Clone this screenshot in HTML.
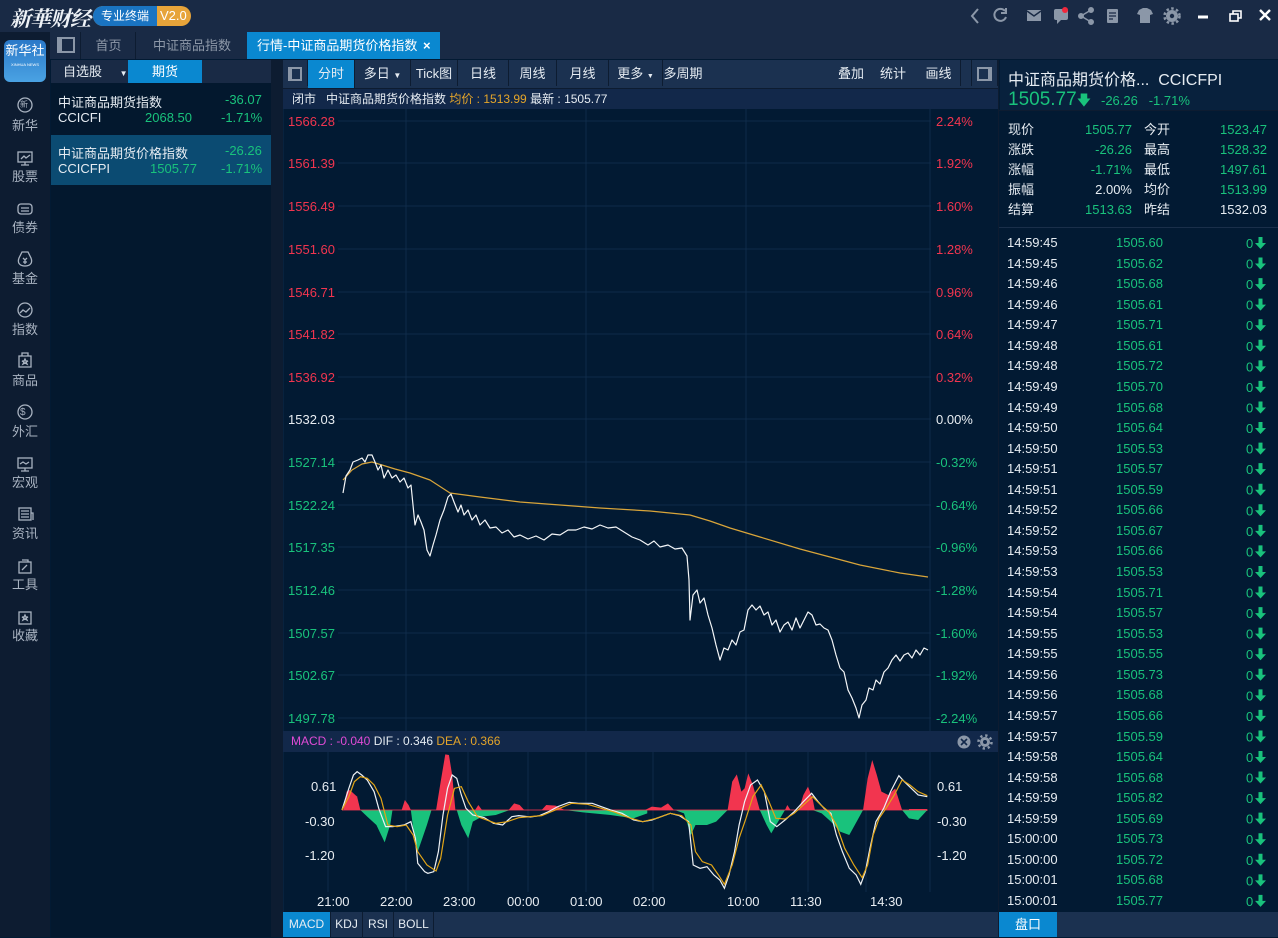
<!DOCTYPE html>
<html><head><meta charset="utf-8"><style>
*{margin:0;padding:0;box-sizing:border-box}
body{width:1278px;height:937px;overflow:hidden;background:#021a33;font-family:"Liberation Sans","Noto Sans CJK SC",sans-serif;font-size:13px;color:#e6ecf2;position:relative}
.a{position:absolute;white-space:nowrap}
.g{color:#19c27c}.r{color:#f2354f}.w{color:#e8edf2}.y{color:#e4a52a}
.tb span{position:absolute;top:0;height:26px;line-height:26px;text-align:center;color:#e6ecf2;border-right:1px solid #0d1c31}
</style></head><body>
<!-- title bar -->
<div class="a" style="left:0;top:0;width:1278px;height:32px;background:#192a45"></div>
<div class="a" style="left:10px;top:3px;font:italic bold 21px 'Noto Serif CJK SC',serif;color:#eef2f6;letter-spacing:-1px">新華财经</div>
<div class="a" style="left:93px;top:6px;width:98px;height:20px;border-radius:10px;background:#e7a43a"></div>
<div class="a" style="left:93px;top:6px;width:64px;height:20px;border-radius:10px 0 0 10px;background:#1a74c2;font-size:12px;line-height:20px;text-align:center;color:#fff">专业终端</div>
<div class="a" style="left:160px;top:6px;font-size:13px;line-height:20px;color:#fff">V2.0</div>
<svg class="a" style="left:960px;top:0" width="318" height="32" fill="none" stroke="#8b97a8" stroke-width="2">
<path d="M18 9l-6 7 6 7"/><path d="M45 11a6 6 0 1 0 1 6M46 8v5h-5"/>
<rect x="67" y="10" width="14" height="11" fill="#8b97a8" stroke="none"/><path d="M67 11l7 5 7-5" stroke="#192a45" stroke-width="1.5"/>
<rect x="94" y="9" width="14" height="11" rx="2" fill="#8b97a8" stroke="none"/><path d="M97 20l0 4 4-4" fill="#8b97a8" stroke="none"/><circle cx="105" cy="10" r="3" fill="#f0283c" stroke="none"/>
<circle cx="121" cy="16" r="2" fill="#8b97a8"/><circle cx="131" cy="10" r="2" fill="#8b97a8"/><circle cx="131" cy="22" r="2" fill="#8b97a8"/><path d="M121 16l10-6M121 16l10 6" stroke-width="1.5"/>
<rect x="147" y="9" width="11" height="14" rx="1" fill="#8b97a8" stroke="none"/><path d="M149 13h7M149 16h7M149 19h4" stroke="#192a45" stroke-width="1.2"/>
<path d="M179 10l4-2h4l4 2 2 4-3 1v8h-10v-8l-3-1z" fill="#8b97a8" stroke="none"/>
<circle cx="212" cy="16" r="6" fill="#8b97a8" stroke="none"/><circle cx="212" cy="16" r="2.2" fill="#192a45" stroke="none"/><circle cx="212" cy="16" r="7.5" stroke-dasharray="2.5 2.4" stroke-width="2.5"/>
<path d="M238 17h10" stroke="#fff" stroke-width="3"/>
<rect x="270" y="14" width="8" height="7" stroke="#fff" stroke-width="1.6"/><path d="M273 14v-3h8v7h-3" stroke="#fff" stroke-width="1.6"/>
<path d="M300 10l10 10M310 10l-10 10" stroke="#fff" stroke-width="2.4"/>
</svg>
<!-- sidebar -->
<div class="a" style="left:0;top:32px;width:50px;height:905px;background:#0d1c31"></div>
<div class="a" style="left:4px;top:40px;width:42px;height:42px;border-radius:6px;background:linear-gradient(#2a78c8,#4aa2e3);font-size:13px;color:#fff;text-align:center;line-height:22px">新华社<div style="font-size:4px;line-height:5px">XINHUA NEWS</div></div>
<div class="a" style="left:0;top:94px;width:50px;color:#a9b3c1;font-size:13px;text-align:center;line-height:51px">
<svg width="50" height="572" fill="none" stroke="#a9b3c1" stroke-width="1.3" style="position:absolute;left:0;top:0">
<circle cx="25" cy="11" r="7"/>
<rect x="18" y="58" width="14" height="10"/><path d="M21 65l3-3 2 2 4-3M25 68v3M21 71h8"/>
<rect x="18" y="110" width="14" height="10" rx="3"/><path d="M21 114h8M21 117h8"/>
<path d="M22 158l-3 6c-2 5 1 8 6 8s8-3 6-8l-3-6zM22 158h6M23 164l2 2 2-2M25 166v4M23 168h4"/>
<circle cx="25" cy="216" r="7"/><path d="M20 219l3-3 3 2 4-4"/>
<path d="M19 262h12v11h-12zM22 262v-3h6v3"/><path d="M25 265l1 2h2l-2 1 1 2-2-1-2 1 1-2-2-1h2z"/>
<circle cx="25" cy="318" r="7"/>
<rect x="18" y="364" width="14" height="10"/><path d="M20 370l3-2 3 2 3-2M25 374v3M21 377h8"/>
<rect x="19" y="414" width="12" height="12"/><path d="M21 417h8M21 420h8M21 423h8M31 419h2v7"/>
<rect x="19" y="468" width="12" height="11"/><path d="M22 466h6v2M22 476l5-5"/>
<rect x="19" y="518" width="12" height="12"/><path d="M25 521l1 2h2l-2 1 1 2-2-1-2 1 1-2-2-1h2z"/>
</svg>
<div style="position:absolute;left:20px;top:5px;font-size:8px;line-height:12px">新</div>
<div style="position:absolute;left:20px;top:313px;font-size:10px;line-height:12px">$</div>
<div style="position:absolute;top:6px;width:50px">新华<br>股票<br>债券<br>基金<br>指数<br>商品<br>外汇<br>宏观<br>资讯<br>工具<br>收藏</div>
</div>
<!-- tabs -->
<div class="a" style="left:50px;top:32px;width:1228px;height:27px;background:#192a45"></div>
<div class="a" style="left:51px;top:32px;width:30px;height:27px;border-right:1px solid #0d1c31"><div style="position:absolute;left:6px;top:5px;width:18px;height:16px;border:2px solid #8b97a8;border-left-width:5px"></div></div>
<div class="a" style="left:82px;top:32px;width:54px;height:27px;line-height:27px;text-align:center;color:#8d98a8;border-right:1px solid #0d1c31">首页</div>
<div class="a" style="left:137px;top:32px;width:110px;height:27px;line-height:27px;text-align:center;color:#8d98a8">中证商品指数</div>
<div class="a" style="left:247px;top:32px;width:193px;height:27px;line-height:27px;background:#0a88d0;color:#fff;padding-left:10px">行情-中证商品期货价格指数 <b style="margin-left:2px">×</b></div>
<!-- left list -->
<div class="a" style="left:51px;top:60px;width:220px;height:877px;background:#03182e"></div>
<div class="a" style="left:51px;top:60px;width:220px;height:23px;background:#192a45"></div>
<div class="a" style="left:51px;top:60px;width:76px;height:23px;line-height:23px;padding-left:12px;color:#e6ecf2">自选股 <span style="font-size:8px;margin-left:14px">▼</span></div>
<div class="a" style="left:128px;top:60px;width:74px;height:23px;line-height:23px;text-align:center;background:#0a88d0;color:#fff">期货</div>
<div class="a" style="left:58px;top:92px">中证商品期货指数</div><div class="a g" style="left:225px;top:92px">-36.07</div>
<div class="a" style="left:58px;top:110px">CCICFI</div><div class="a g" style="left:145px;top:110px">2068.50</div><div class="a g" style="left:221px;top:110px">-1.71%</div>
<div class="a" style="left:51px;top:135px;width:220px;height:50px;background:#0b4b72"></div>
<div class="a" style="left:58px;top:143px">中证商品期货价格指数</div><div class="a g" style="left:225px;top:143px">-26.26</div>
<div class="a" style="left:58px;top:161px">CCICFPI</div><div class="a g" style="left:150px;top:161px">1505.77</div><div class="a g" style="left:221px;top:161px">-1.71%</div>
<div class="a" style="left:271px;top:60px;width:12px;height:877px;background:#0d1c31"></div>
<!-- chart toolbar -->
<div class="a tb" style="left:283px;top:60px;width:715px;height:29px;background:#1b3150;border-bottom:1px solid #0d1c31">
<span style="left:0;width:25px"><i style="position:absolute;left:5px;top:7px;width:14px;height:14px;border:2px solid #8b97a8;border-left-width:4px"></i></span>
<span style="left:25px;width:47px;background:#0a88d0;height:28px;line-height:28px">分时</span>
<span style="left:72px;width:56px;line-height:28px">多日 <small style="font-size:8px">▼</small></span>
<span style="left:128px;width:47px;line-height:28px">Tick图</span>
<span style="left:175px;width:51px;line-height:28px">日线</span>
<span style="left:226px;width:48px;line-height:28px">周线</span>
<span style="left:274px;width:52px;line-height:28px">月线</span>
<span style="left:326px;width:54px;line-height:28px">更多 <small style="font-size:7px">▼</small></span>
<span style="left:380px;width:40px;line-height:28px;border:none">多周期</span>
<span style="left:548px;width:40px;line-height:28px;border:none">叠加</span>
<span style="left:590px;width:40px;line-height:28px;border:none">统计</span>
<span style="left:634px;width:44px;line-height:28px">画线</span>
<span style="left:688px;width:27px;border-left:1px solid #0d1c31"><i style="position:absolute;left:5px;top:7px;width:15px;height:14px;border:2px solid #8b97a8;border-right-width:4px"></i></span>
</div>
<div class="a" style="left:283px;top:89px;width:715px;height:20px;background:#12284a;font-size:12px;line-height:20px;padding-left:9px">闭市 &nbsp; 中证商品期货价格指数 <span class="y">均价 : 1513.99</span> 最新 : 1505.77</div>
<!-- main chart -->
<svg class="a" style="left:283px;top:109px" width="715" height="622">
<g stroke="#0f2b4a" stroke-width="1">
<path d="M55 12H648M55 54H648M55 97H648M55 140H648M55 183H648M55 225H648M55 268H648M55 310H648M55 353H648M55 396H648M55 438H648M55 481H648M55 524H648M55 566H648M55 609H648"/>
<path d="M123 0V622M303 0V622M463 0V622M647 0V622M0 0V622"/>
</g>
<g font-size="13" font-family="Liberation Sans,sans-serif">
<g fill="#f2354f"><text x="5" y="17">1566.28</text><text x="5" y="59">1561.39</text><text x="5" y="102">1556.49</text><text x="5" y="145">1551.60</text><text x="5" y="188">1546.71</text><text x="5" y="230">1541.82</text><text x="5" y="273">1536.92</text>
<text x="653" y="17">2.24%</text><text x="653" y="59">1.92%</text><text x="653" y="102">1.60%</text><text x="653" y="145">1.28%</text><text x="653" y="188">0.96%</text><text x="653" y="230">0.64%</text><text x="653" y="273">0.32%</text></g>
<text x="5" y="315" fill="#e8edf2">1532.03</text><text x="653" y="315" fill="#e8edf2">0.00%</text>
<g fill="#19c27c"><text x="5" y="358">1527.14</text><text x="5" y="401">1522.24</text><text x="5" y="443">1517.35</text><text x="5" y="486">1512.46</text><text x="5" y="529">1507.57</text><text x="5" y="571">1502.67</text><text x="5" y="614">1497.78</text>
<text x="653" y="358">-0.32%</text><text x="653" y="401">-0.64%</text><text x="653" y="443">-0.96%</text><text x="653" y="486">-1.28%</text><text x="653" y="529">-1.60%</text><text x="653" y="571">-1.92%</text><text x="653" y="614">-2.24%</text></g>
</g>
<g transform="translate(-283,-109)" fill="none" stroke-linejoin="round">
<polyline stroke="#d9a53a" stroke-width="1.2" points="343,480 352,470 362,464 372,462 382,465 395,469 410,473 430,480 450,493 480,497 520,502 560,505 600,508 650,511 690,515 710,521 730,528 760,537 800,549 830,557 860,565 900,573 928,577"/>
<polyline stroke="#f4f6f8" stroke-width="1.2" points="343,493 346,476 350,470 353,462 358,460 362,458 365,462 368,455 372,455 375,462 378,470 381,465 384,478 388,470 392,478 396,475 400,482 404,478 408,488 411,485 413,505 415,525 418,515 421,522 424,530 427,550 430,556 433,545 436,535 440,520 444,510 448,497 451,494 454,502 458,512 461,505 464,515 468,510 472,520 476,515 480,525 485,520 490,528 496,527 502,533 508,530 514,537 520,535 528,539 536,536 544,540 552,534 560,535 568,530 576,530 584,527 592,529 600,525 608,528 616,527 624,532 632,537 640,540 648,545 654,541 660,547 668,545 675,549 682,548 687,556 689,580 690,620 693,595 697,590 700,603 704,598 708,615 712,628 716,645 720,660 724,648 728,650 732,640 736,645 740,632 744,630 748,610 752,605 756,610 760,606 764,615 768,612 772,625 776,620 780,632 784,625 788,622 792,630 796,618 800,628 804,620 808,612 812,615 816,625 820,624 824,628 828,630 832,640 836,655 840,668 844,672 848,690 852,698 856,708 859,718 862,705 866,700 869,688 873,690 876,680 880,684 884,672 888,668 892,660 896,655 900,661 904,655 908,653 912,658 916,650 920,655 924,648 928,650"/>
</g>
</svg>
<!-- MACD -->
<div class="a" style="left:283px;top:731px;width:715px;height:21px;background:#12284a;font-size:12px;line-height:21px;padding-left:8px"><span style="color:#e04bd6">MACD : -0.040</span> DIF : 0.346 <span class="y">DEA : 0.366</span></div>
<svg class="a" style="left:956px;top:734px" width="40" height="16"><circle cx="8" cy="8" r="6.5" fill="#8b97a8"/><path d="M5 5l6 6M11 5l-6 6" stroke="#12284a" stroke-width="1.6"/><circle cx="29" cy="8" r="5" fill="#8b97a8"/><circle cx="29" cy="8" r="6.5" fill="none" stroke="#8b97a8" stroke-width="2.5" stroke-dasharray="2.3 2.8"/><circle cx="29" cy="8" r="2" fill="#12284a"/></svg>
<svg class="a" style="left:283px;top:752px" width="715" height="160">
<path d="M45 0V140M123 0V140M185 0V140M245 0V140M303 0V140M370 0V140M463 0V140M525 0V140M583 0V140M647 0V140M0 0V160" stroke="#0f2b4a"/>
<g font-size="13" fill="#e8edf2" font-family="Liberation Sans,sans-serif"><text x="28" y="39">0.61</text><text x="22" y="74">-0.30</text><text x="22" y="108">-1.20</text><text x="654" y="39">0.61</text><text x="654" y="74">-0.30</text><text x="654" y="108">-1.20</text>
<text x="34" y="154">21:00</text><text x="97" y="154">22:00</text><text x="160" y="154">23:00</text><text x="224" y="154">00:00</text><text x="287" y="154">01:00</text><text x="350" y="154">02:00</text><text x="444" y="154">10:00</text><text x="507" y="154">11:30</text><text x="587" y="154">14:30</text></g>
</svg>
<svg class="a" style="left:0;top:0" width="1278" height="937" viewBox="0 0 1278 937" style="pointer-events:none">
<g transform="translate(280,725) scale(0.4591,0.3333)">
<path d="M1370 255H1410" stroke="#f2354f" stroke-width="2" vector-effect="non-scaling-stroke"/>
<g fill="#f2354f"><polygon points="138,255 145,200 152,195 160,205 168,215 175,255"/><polygon points="265,255 272,225 280,240 285,255"/><polygon points="340,255 350,170 360,88 368,90 375,150 382,255"/><polygon points="425,255 432,240 440,255"/><polygon points="498,255 510,235 522,240 532,255"/><polygon points="570,255 580,240 600,242 620,255"/><polygon points="795,255 810,245 830,248 845,235 858,255"/><polygon points="975,255 985,170 995,148 1005,200 1012,190 1020,145 1030,180 1045,255"/><polygon points="1100,255 1105,240 1112,255"/><polygon points="1130,255 1140,210 1150,185 1160,220 1165,255"/><polygon points="1270,255 1280,160 1290,105 1300,150 1310,200 1325,210 1340,190 1355,255"/></g>
<g fill="#19c27c"><polygon points="175,255 190,275 210,300 228,352 240,300 245,255"/><polygon points="285,255 292,330 300,380 310,340 320,300 330,255"/><polygon points="385,255 395,300 410,340 420,290 440,275 470,270 500,255"/><polygon points="620,255 660,262 720,270 770,280 800,265 800,255"/><polygon points="860,255 880,265 895,330 905,300 930,300 950,290 975,255"/><polygon points="1045,255 1060,300 1070,325 1085,290 1100,255"/><polygon points="1160,255 1180,265 1200,290 1220,320 1240,330 1260,280 1270,255"/><polygon points="1355,255 1370,280 1390,285 1400,270 1410,255"/></g>
<path d="M135 255H1410" stroke="#f2354f" stroke-width="1" vector-effect="non-scaling-stroke" opacity=".8"/>
<polyline fill="none" stroke="#eef1f5" stroke-width="1.2" vector-effect="non-scaling-stroke" points="135,255 150,190 160,150 168,140 178,150 190,165 205,200 215,250 230,305 245,305 270,300 285,290 295,340 300,415 315,440 322,445 335,440 345,380 355,270 365,190 375,150 385,160 395,210 405,250 420,270 445,278 465,295 485,300 505,275 520,272 545,276 565,272 585,260 605,245 630,232 650,235 680,235 700,245 720,255 745,265 770,285 790,290 810,285 830,275 850,265 870,272 890,290 900,420 915,430 930,425 945,450 958,465 968,490 978,450 990,380 1000,300 1012,230 1025,180 1040,165 1055,200 1068,290 1082,305 1100,285 1120,260 1140,230 1158,205 1172,230 1185,250 1200,265 1212,330 1225,380 1240,430 1255,450 1265,478 1275,440 1285,370 1298,290 1315,250 1330,200 1348,152 1360,170 1375,190 1390,210 1410,215"/>
<polyline fill="none" stroke="#e2a517" stroke-width="1.2" vector-effect="non-scaling-stroke" points="135,255 150,215 162,170 175,155 190,160 205,180 220,220 235,300 255,305 275,300 290,330 300,380 320,420 340,438 350,400 365,270 380,190 395,185 410,230 430,275 450,285 470,295 495,290 520,278 545,275 570,272 600,255 635,235 670,238 700,250 730,262 760,278 790,290 820,280 850,265 875,272 895,300 905,380 920,410 940,420 955,450 968,478 985,420 1000,340 1015,280 1030,215 1048,180 1065,230 1080,280 1100,282 1120,265 1140,240 1160,215 1178,240 1195,260 1212,300 1230,370 1250,420 1268,458 1280,420 1292,330 1305,280 1320,250 1338,210 1355,165 1372,180 1390,200 1410,212"/>
</g></svg>
<!-- bottom tabs -->
<div class="a tb" style="left:283px;top:912px;width:715px;height:25px;background:#1b3150;font-size:12px">
<span style="left:0;width:48px;background:#0a88d0;height:25px;line-height:25px">MACD</span><span style="left:48px;width:32px;line-height:25px">KDJ</span><span style="left:80px;width:31px;line-height:25px">RSI</span><span style="left:111px;width:40px;line-height:25px">BOLL</span></div>
<!-- right panel -->
<div class="a" style="left:998px;top:60px;width:1px;height:877px;background:#0d1c31"></div>
<div class="a" style="left:1000px;top:60px;width:278px;height:50px;background:#08213d"></div>
<div class="a" style="left:1008px;top:66px;font-size:16px">中证商品期货价格... &nbsp;CCICFPI</div>
<div class="a g" style="left:1008px;top:89px;font-size:19px">1505.77<span style="font-size:14px">🡇</span></div>
<div class="a g" style="left:1101px;top:93px">-26.26 &nbsp;&nbsp;-1.71%</div>
<div class="a" style="left:999px;top:110px;width:279px;height:1px;background:#0d1c31"></div>
<div class="a" style="left:1008px;top:120px;line-height:20px">现价<br>涨跌<br>涨幅<br>振幅<br>结算</div>
<div class="a" style="left:1060px;top:120px;width:72px;text-align:right;line-height:20px"><span class="g">1505.77</span><br><span class="g">-26.26</span><br><span class="g">-1.71%</span><br>2.00%<br><span class="g">1513.63</span></div>
<div class="a" style="left:1144px;top:120px;line-height:20px">今开<br>最高<br>最低<br>均价<br>昨结</div>
<div class="a" style="left:1195px;top:120px;width:72px;text-align:right;line-height:20px"><span class="g">1523.47</span><br><span class="g">1528.32</span><br><span class="g">1497.61</span><br><span class="g">1513.99</span><br>1532.03</div>
<div class="a" style="left:999px;top:227px;width:279px;height:1px;background:#1a2f4a"></div>
<div class="a" style="left:1007px;top:233px;line-height:20.56px">14:59:45<br>14:59:45<br>14:59:46<br>14:59:46<br>14:59:47<br>14:59:48<br>14:59:48<br>14:59:49<br>14:59:49<br>14:59:50<br>14:59:50<br>14:59:51<br>14:59:51<br>14:59:52<br>14:59:52<br>14:59:53<br>14:59:53<br>14:59:54<br>14:59:54<br>14:59:55<br>14:59:55<br>14:59:56<br>14:59:56<br>14:59:57<br>14:59:57<br>14:59:58<br>14:59:58<br>14:59:59<br>14:59:59<br>15:00:00<br>15:00:00<br>15:00:01<br>15:00:01</div>
<div class="a g" style="left:1116px;top:233px;line-height:20.56px">1505.60<br>1505.62<br>1505.68<br>1505.61<br>1505.71<br>1505.61<br>1505.72<br>1505.70<br>1505.68<br>1505.64<br>1505.53<br>1505.57<br>1505.59<br>1505.66<br>1505.67<br>1505.66<br>1505.53<br>1505.71<br>1505.57<br>1505.53<br>1505.55<br>1505.73<br>1505.68<br>1505.66<br>1505.59<br>1505.64<br>1505.68<br>1505.82<br>1505.69<br>1505.73<br>1505.72<br>1505.68<br>1505.77</div>
<svg class="a" style="left:1246px;top:233px" width="24" height="680"><g fill="#19c27c">
<defs><g id="ar"><text x="0" y="15" font-size="13" font-family="Liberation Sans,sans-serif">0</text><path d="M12.5 4h4v6h3.5l-5.5 6-5.5-6h3.5z"/></g></defs>
<use href="#ar" y="0"/><use href="#ar" y="20.56"/><use href="#ar" y="41.12"/><use href="#ar" y="61.68"/><use href="#ar" y="82.24"/><use href="#ar" y="102.8"/><use href="#ar" y="123.36"/><use href="#ar" y="143.92"/><use href="#ar" y="164.48"/><use href="#ar" y="185.04"/><use href="#ar" y="205.6"/><use href="#ar" y="226.16"/><use href="#ar" y="246.72"/><use href="#ar" y="267.28"/><use href="#ar" y="287.84"/><use href="#ar" y="308.4"/><use href="#ar" y="328.96"/><use href="#ar" y="349.52"/><use href="#ar" y="370.08"/><use href="#ar" y="390.64"/><use href="#ar" y="411.2"/><use href="#ar" y="431.76"/><use href="#ar" y="452.32"/><use href="#ar" y="472.88"/><use href="#ar" y="493.44"/><use href="#ar" y="514"/><use href="#ar" y="534.56"/><use href="#ar" y="555.12"/><use href="#ar" y="575.68"/><use href="#ar" y="596.24"/><use href="#ar" y="616.8"/><use href="#ar" y="637.36"/><use href="#ar" y="657.92"/>
</g></svg>
<div class="a" style="left:999px;top:912px;width:279px;height:25px;background:#1b3150"></div>
<div class="a" style="left:999px;top:912px;width:58px;height:25px;background:#0a88d0;text-align:center;line-height:25px;color:#fff">盘口</div>
</body></html>
